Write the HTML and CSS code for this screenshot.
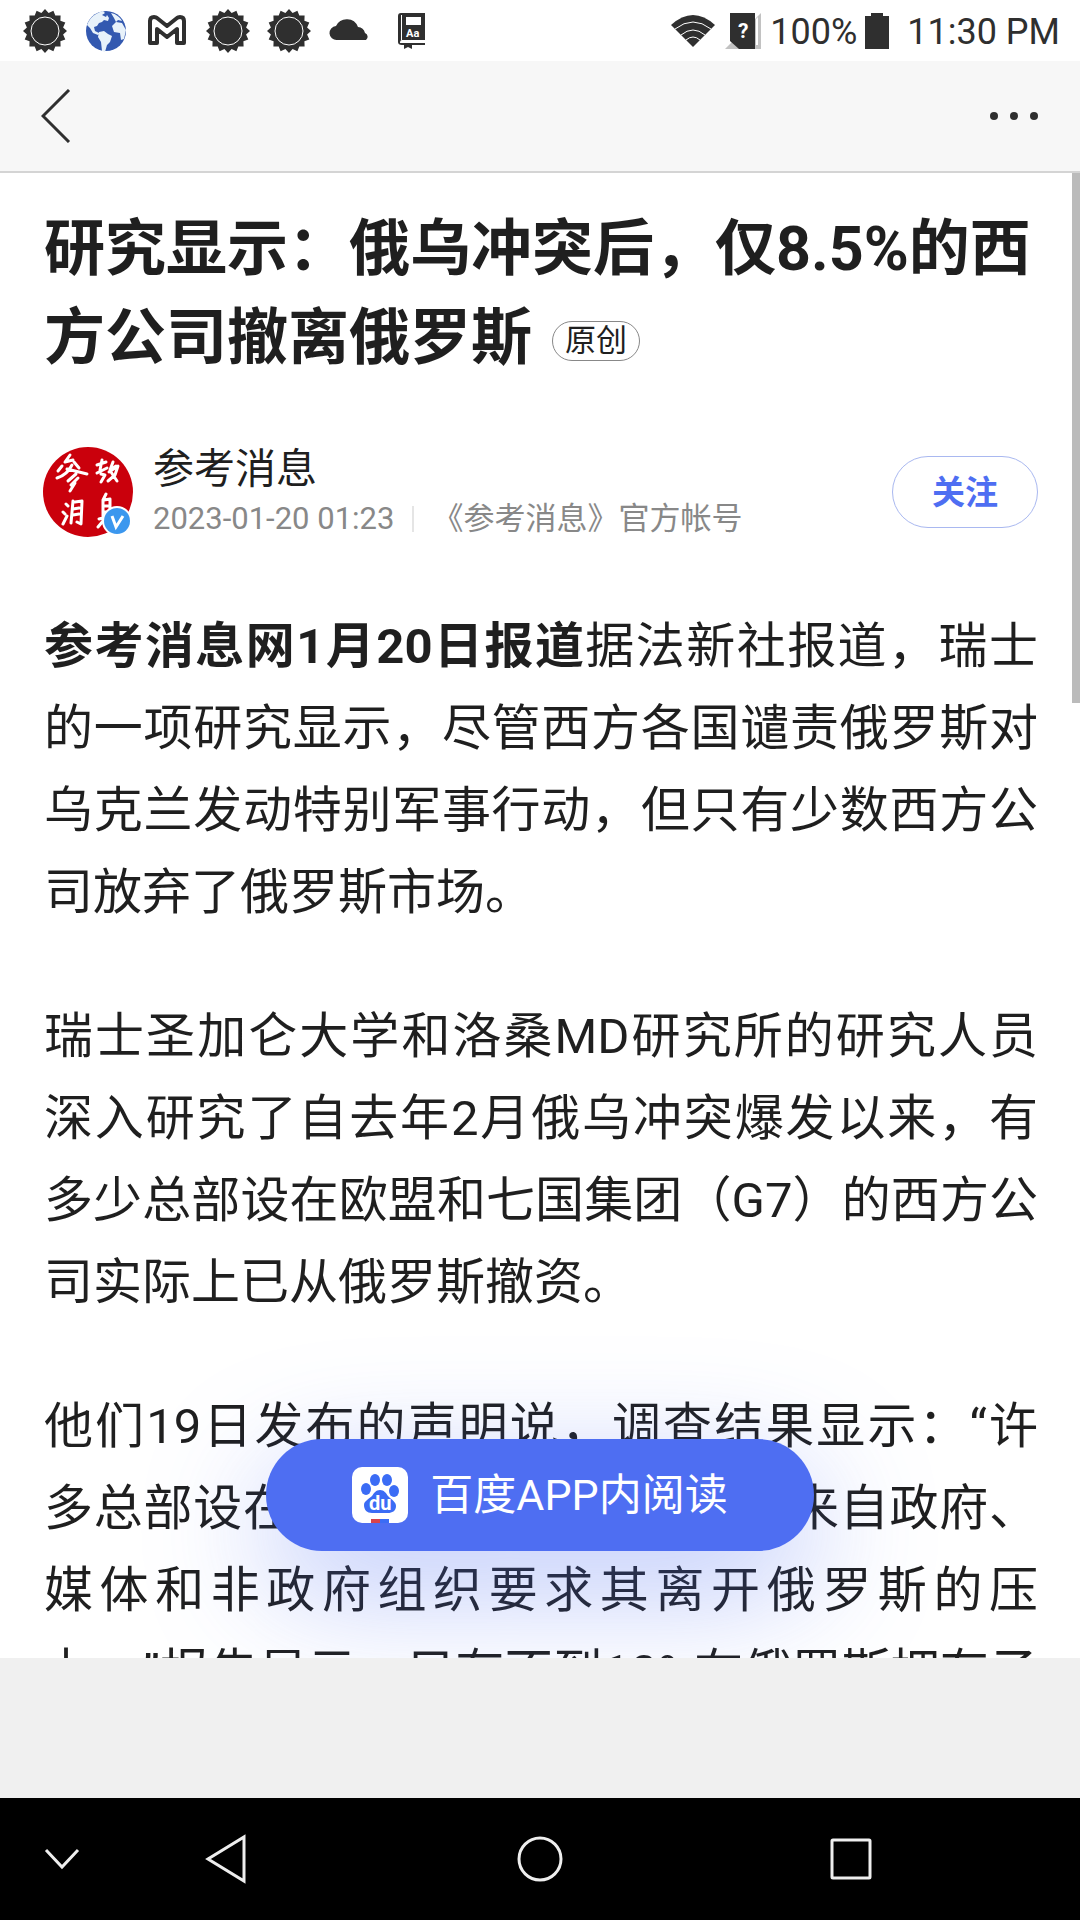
FILE: index.html
```html
<!DOCTYPE html>
<html lang="zh-CN">
<head>
    <meta charset="UTF-8">
    <meta name="viewport" content="width=device-width, initial-scale=1">
    <title>研究显示：俄乌冲突后，仅8.5%的西方公司撤离俄罗斯</title>
    <link rel="stylesheet" href="styles.css">
</head>
<body>
<svg width="0" height="0" class="defs">
    <symbol id="sun" viewBox="0 0 44 44">
        <path d="M44 22L40.1 25.6 42.3 30.4 37.4 32.3 37.6 37.6 32.3 37.4 30.4 42.3 25.6 40.1 22 44 18.4 40.1 13.6 42.3 11.7 37.4 6.4 37.6 6.6 32.3 1.7 30.4 3.9 25.6 0 22 3.9 18.4 1.7 13.6 6.6 11.7 6.4 6.4 11.7 6.6 13.6 1.7 18.4 3.9 22 0 25.6 3.9 30.4 1.7 32.3 6.6 37.6 6.4 37.4 11.7 42.3 13.6 40.1 18.4z"/>
        <circle cx="22" cy="22" r="14" stroke="#fff"/>
    </symbol>
</svg>
<div class="status">
    <div class="notices">
        <svg class="ico" viewBox="0 0 44 44"><use href="#sun"/></svg>
        <svg class="ico" viewBox="0 0 44 44">
            <circle cx="22" cy="22" r="20" fill="#3359b0"/>
            <path fill="#e8f2fa" d="M3 16C6 8 12 4 19 2l2 2-3 2 4 2 1-2 2 3-1 3-4-1-2 2-3 1-2 3-3 1 1 4 4 2-1 2-5-2-3-5zM15 23l5-1 4 3 4 2-2 6-3 3-2 7-3-1-1-9-3-5zM27 4c5 1 9 4 11 8l-4-1-2 2-2-4zM28 17l4-4 6 1 4 7-2 9-3 1-1-7-6-1z"/>
        </svg>
        <svg class="ico" viewBox="0 0 44 44">
            <path class="line" d="M9 8q-4 0-4 4v22h7V20l10 8 10-8v14h7V12q0-4-4-4-2 0-3 1l-10 8-10-8q-1-1-3-1z"/>
        </svg>
        <svg class="ico" viewBox="0 0 44 44"><use href="#sun"/></svg>
        <svg class="ico" viewBox="0 0 44 44"><use href="#sun"/></svg>
        <svg class="ico" viewBox="0 0 44 44"><path d="M9 31a7 7 0 0 1-1-14 12 12 0 0 1 22 1 8 8 0 0 1 7 6 4 4 0 0 1 1 7z"/></svg>
        <svg class="ico" viewBox="0 0 44 44">
            <path d="M12 4h24v27H13q-2 0-2 3h25v2H23v4l-4-2-4 2v-4h-2q-4 0-4-3V7q0-3 3-3z"/>
            <path fill="#fff" d="M17 8h15v8H17zM12 6h1v25h-1z"/>
            <text x="17" y="28" class="aa">Aa</text>
        </svg>
    </div>
    <div class="system">
        <svg class="wifi" viewBox="0 0 44 32">
            <path d="M22 32L0 10Q22-10 44 10z"/>
            <path fill="none" stroke="#fff" d="M4 14q18-14 36 0M10 20q12-10 24 0M15 25q7-6 14 0"/>
        </svg>
        <svg class="sim" viewBox="0 0 36 36">
            <path fill="#c2c2c2" d="M36 0v36H0z"/>
            <path fill="#fff" d="M31 6l2-2v28h-2z"/>
            <path d="M5 0h25v36H14l-9-8z"/>
            <text x="13" y="25" class="mark">?</text>
        </svg>
        <span>100%</span>
        <svg class="battery" viewBox="0 0 24 36"><path d="M6 0h12v3h6v33H0V3h6z"/></svg>
        <time>11:30 PM</time>
    </div>
</div>
<header class="nav">
    <button class="back" aria-label="返回">
        <svg viewBox="0 0 30 54"><path class="thin" d="M28 1L2 27l26 26"/></svg>
    </button>
    <button class="more" aria-label="更多">
        <svg viewBox="0 0 50 10"><circle cx="5" cy="5" r="4"/><circle cx="25" cy="5" r="4"/><circle cx="45" cy="5" r="4"/></svg>
    </button>
</header>
<main class="page">
    <div class="scrollbar"></div>
    <article class="article">
        <h1>研究显示：俄乌冲突后，仅8.5%的西方公司撤离俄罗斯<span class="tag">原创</span></h1>
        <div class="author">
            <svg class="avatar" viewBox="0 0 90 90">
                <circle cx="45" cy="45" r="45" fill="#ca000c"/>
                <g class="brush">
                    <path d="M27 8l-5 7 8-2M19 19l-4 5M31 15l5 6M14 31q10-3 15-13M24 22l20 5M33 27l-8 7M35 31l-7 7M32 36l-5 8"/>
                    <path d="M54 18l9-3M59 13l-2 10M54 26l10-5M58 27l4 1-4 7M70 15l-3 8 6-4M66 25l9-6-3 9-7 6M68 25l6 9"/>
                    <path d="M23 57l2 2M20 65l2 2M20 77l4-8M30 54l-2 22M32 55l7-1-1 23-4-2M30 62l6-1M30 68l6-1"/>
                    <path d="M63 47l-3 6v20M61 53l6-1v17M61 59h5M61 65h5M56 72l12-3M60 74l-5 6"/>
                </g>
                <circle cx="74" cy="74" r="15" fill="#fff"/>
                <circle cx="74" cy="74" r="13" fill="#3b97ee"/>
                <path d="M69 69l4 11 7-11" fill="none" stroke="#fff" stroke-width="3"/>
            </svg>
            <div class="info">
                <div class="name">参考消息</div>
                <div class="meta"><time>2023-01-20 01:23</time><span class="desc">《参考消息》官方帐号</span></div>
            </div>
            <button class="follow">关注</button>
        </div>
        <p><b>参考消息网1月20日报道</b>据法新社报道，瑞士的一项研究显示，尽管西方各国谴责俄罗斯对乌克兰发动特别军事行动，但只有少数西方公司放弃了俄罗斯市场。</p>
        <p>瑞士圣加仑大学和洛桑MD研究所的研究人员深入研究了自去年2月俄乌冲突爆发以来，有多少总部设在欧盟和七国集团（G7）的西方公司实际上已从俄罗斯撤资。</p>
        <p>他们19日发布的声明说，调查结果显示：“许多总部设在西方国家的企业都面临来自政府、媒体和非政府组织要求其离开俄罗斯的压力。”报告显示，只有不到10%在俄罗斯拥有子公司的西方企业撤离。</p>
    </article>
    <button class="open-app">
        <svg class="du" viewBox="0 0 56 56">
            <rect width="56" height="56" rx="10" fill="#fff"/>
            <g fill="#3b6cf5">
                <ellipse cx="14" cy="22" rx="5" ry="6"/>
                <ellipse cx="23" cy="13" rx="5" ry="6"/>
                <ellipse cx="35" cy="13" rx="5" ry="6"/>
                <ellipse cx="42" cy="24" rx="5" ry="6"/>
                <path d="M28 23c4 0 6 3 8 6 4 4 8 6 8 10 0 5-4 7-8 7H20c-5 0-8-3-8-8 0-4 5-6 8-9 2-3 4-6 8-6z"/>
                <path d="M28 52h9v4h-9z"/>
            </g>
            <path d="M19 52h9v4h-9z" fill="#d8434b"/>
            <text x="17" y="43" class="du-text">du</text>
        </svg>
        <span>百度APP内阅读</span>
    </button>
</main>
<div class="toolbar"></div>
<nav class="keys">
    <button aria-label="收起"><svg viewBox="0 0 44 44"><path d="M6 13l16 17 16-17"/></svg></button>
    <button aria-label="后退"><svg viewBox="0 0 44 44"><path d="M40 0v44L4 22z"/></svg></button>
    <button aria-label="主页"><svg viewBox="0 0 44 44"><circle cx="22" cy="22" r="21"/></svg></button>
    <button aria-label="最近"><svg viewBox="0 0 44 44"><rect x="3" y="3" width="38" height="38" rx="1"/></svg></button>
</nav>
</body>
</html>
```
FILE: styles.css
```css
*{margin:0;padding:0;box-sizing:border-box;}
body{height:100vh;display:flex;flex-direction:column;overflow:hidden;background:#fff;color:#1f1f1f;
    font-family:Roboto,"Noto Sans CJK SC",sans-serif;text-spacing-trim:space-all;}
button{border:0;background:none;font-family:inherit;cursor:pointer;}
svg{display:block;fill:#2f2f2f;flex:none;}
.defs{position:absolute;}

/* 状态栏 */
.status{height:61px;flex:none;display:flex;justify-content:space-between;align-items:center;
    padding:0 20px 0 23px;font-size:36px;color:#2f2f2f;}
.notices{display:flex;gap:17px;}
.ico{width:44px;height:44px;}
.line{fill:none;stroke:#2f2f2f;stroke-width:4;stroke-linejoin:round;}
.aa{font-size:11px;font-weight:700;fill:#fff;}
.system{display:flex;align-items:center;}
.system span,.system time{padding-top:3px;}
.wifi{width:44px;height:32px;margin-right:10px;}
.sim{width:36px;height:36px;margin-right:9px;}
.mark{font-size:21px;font-weight:700;fill:#fff;}
.battery{width:24px;height:36px;margin:0 18px 0 8px;}

/* 导航 */
.nav{height:112px;flex:none;display:flex;justify-content:space-between;align-items:center;
    padding:0 41px;background:#f7f7f7;border-bottom:2px solid #d4d4d4;}
.back svg{width:30px;height:54px;}
.thin{fill:none;stroke:#2f2f2f;stroke-width:3;}
.more svg{width:50px;height:10px;}

/* 正文 */
.page{flex:1;min-height:0;position:relative;overflow:hidden;}
.scrollbar{position:absolute;top:0;right:0;width:8px;height:530px;background:#bbb;}
.article{padding:32px 42px 0 44px;}
h1{font-size:61px;line-height:89px;font-weight:700;}
.tag{display:inline-block;margin-left:20px;padding:0 12px;border:1px solid #888;border-radius:20px;
    font-size:31px;line-height:38px;font-weight:400;vertical-align:8px;}
.author{display:flex;align-items:center;margin:59px 0 64px;}
.avatar{width:90px;height:90px;margin-left:-1px;}
.brush{fill:none;stroke:#fff;stroke-width:3;stroke-linecap:round;stroke-linejoin:round;}
.info{flex:1;margin-left:20px;}
.name{font-size:41px;line-height:54px;}
.meta{display:flex;align-items:center;font-size:31px;line-height:46px;color:#888;}
.desc{margin-left:18px;padding-left:20px;background:linear-gradient(#e5e5e5,#e5e5e5) no-repeat left center/2px 26px;}
.follow{width:146px;height:72px;padding-bottom:4px;border:1px solid #a9b8f0;border-radius:36px;color:#4e6ef2;
    font-size:33px;font-weight:700;}
p{margin-bottom:62px;font-size:49px;line-height:82px;text-align:justify;}

.open-app{position:absolute;left:50%;bottom:107px;transform:translateX(-50%);width:548px;height:112px;
    display:flex;justify-content:center;align-items:center;gap:22px;border-radius:56px;
    background:#4e6ef2;color:#fff;font-size:43px;box-shadow:0 36px 126px rgba(78,110,242,.4);}
.open-app span{padding-bottom:8px;}
.du{width:56px;height:56px;}
.du-text{font-size:20px;font-weight:700;fill:#fff;}

/* 底部 */
.toolbar{height:140px;flex:none;background:#f0f0f0;}
.keys{height:122px;flex:none;display:grid;grid-template-columns:123px 206px 1fr 200px;padding-right:129px;background:#000;}
.keys button{display:flex;justify-content:center;align-items:center;}
.keys svg{width:44px;height:44px;fill:none;stroke:#eee;stroke-width:3;overflow:visible;}
```
